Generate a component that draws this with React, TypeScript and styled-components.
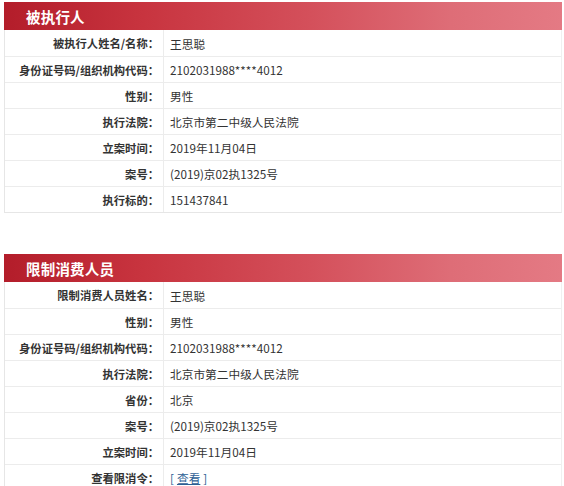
import React from "react";
import styled, { createGlobalStyle } from "styled-components";

const Global = createGlobalStyle`
  html, body { margin: 0; padding: 0; background: #ffffff; }
  body { font-family: "Noto Sans CJK SC", "Microsoft YaHei", sans-serif; color: #333; }
`;

const Page = styled.div`
  width: 564px;
  height: 486px;
  overflow: hidden;
  padding: 2px 2px 0 4px;
  box-sizing: border-box;
  display: flex;
  flex-direction: column;
  gap: 41px;
`;

const Section = styled.section`
  display: flex;
  flex-direction: column;
`;

const Header = styled.div`
  height: 28px;
  display: flex;
  align-items: center;
  padding-left: 22px;
  background: linear-gradient(90deg, #b31d2a 0%, #c8343f 25%, #d4505b 55%, #de6d77 80%, #e47a84 100%);
  color: #fff;
  font-size: 14.5px;
  font-weight: 700;
  letter-spacing: 0.2px;
`;

const Table = styled.div`
  display: flex;
  flex-direction: column;
  border-left: 1px solid #e6e6e6;
  border-right: 1px solid #f0f0f0;
  border-bottom: 1px solid #e6e6e6;
`;

const Row = styled.div`
  display: grid;
  grid-template-columns: 159px 1fr;
  height: 25px;
  border-top: 1px solid #ececec;
  &:first-child { border-top: none; height: 26px; }
`;

const Label = styled.div`
  display: flex;
  align-items: center;
  justify-content: flex-end;
  padding-right: 4px;
  font-size: 11.3px;
  font-weight: 700;
  color: #333;
  border-right: 1px solid #ececec;
  white-space: nowrap;
`;

const Value = styled.div`
  display: flex;
  align-items: center;
  padding-left: 6px;
  font-size: 11.7px;
  color: #333;
  white-space: nowrap;
`;

const LinkWrap = styled.span`
  color: #2e5f95;
`;

const Link = styled.a`
  color: #2e5f95;
  text-decoration: underline;
  margin: 0 3px;
`;

type Item = { label: string; value: React.ReactNode };

const section1: Item[] = [
  { label: "被执行人姓名/名称：", value: "王思聪" },
  { label: "身份证号码/组织机构代码：", value: "2102031988****4012" },
  { label: "性别：", value: "男性" },
  { label: "执行法院：", value: "北京市第二中级人民法院" },
  { label: "立案时间：", value: "2019年11月04日" },
  { label: "案号：", value: "(2019)京02执1325号" },
  { label: "执行标的：", value: "151437841" },
];

const section2: Item[] = [
  { label: "限制消费人员姓名：", value: "王思聪" },
  { label: "性别：", value: "男性" },
  { label: "身份证号码/组织机构代码：", value: "2102031988****4012" },
  { label: "执行法院：", value: "北京市第二中级人民法院" },
  { label: "省份：", value: "北京" },
  { label: "案号：", value: "(2019)京02执1325号" },
  { label: "立案时间：", value: "2019年11月04日" },
  {
    label: "查看限消令：",
    value: (
      <LinkWrap>
        [<Link>查看</Link>]
      </LinkWrap>
    ),
  },
];

const InfoSection = ({ title, items }: { title: string; items: Item[] }) => (
  <Section>
    <Header>{title}</Header>
    <Table>
      {items.map((it, i) => (
        <Row key={i}>
          <Label>{it.label}</Label>
          <Value>{it.value}</Value>
        </Row>
      ))}
    </Table>
  </Section>
);

export default function App() {
  return (
    <>
      <Global />
      <Page>
        <InfoSection title="被执行人" items={section1} />
        <InfoSection title="限制消费人员" items={section2} />
      </Page>
    </>
  );
}
